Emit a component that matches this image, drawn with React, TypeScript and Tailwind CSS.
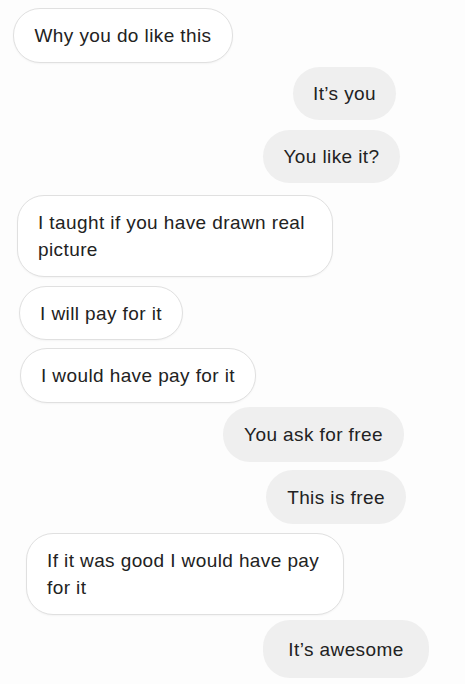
import React from "react";

type Msg = { text: string; me: boolean; cls: string };

const msgs: Msg[] = [
  { text: "Why you do like this", me: false, cls: "mt-[8px] ml-[13px] h-[55px] w-[220px] justify-center whitespace-nowrap" },
  { text: "It\u2019s you", me: true, cls: "mt-[4px] mr-[69px] h-[53px] w-[103px] justify-center whitespace-nowrap" },
  { text: "You like it?", me: true, cls: "mt-[10px] mr-[65px] h-[53px] w-[137px] justify-center whitespace-nowrap" },
  { text: "I taught if you have drawn real picture", me: false, cls: "mt-[12px] ml-[17px] w-[316px] px-5" },
  { text: "I will pay for it", me: false, cls: "mt-[9px] ml-[19px] h-[54px] w-[164px] justify-center whitespace-nowrap" },
  { text: "I would have pay for it", me: false, cls: "mt-[8px] ml-[20px] h-[55px] w-[236px] justify-center whitespace-nowrap" },
  { text: "You ask for free", me: true, cls: "mt-[4px] mr-[61px] h-[55px] w-[181px] justify-center whitespace-nowrap" },
  { text: "This is free", me: true, cls: "mt-[8px] mr-[59px] h-[54px] w-[140px] justify-center whitespace-nowrap" },
  { text: "If it was good I would have pay for it", me: false, cls: "mt-[9px] ml-[26px] w-[318px] px-5" },
  { text: "It\u2019s awesome", me: true, cls: "mt-[5px] mr-[36px] h-[58px] w-[166px] justify-center whitespace-nowrap" },
];

export default function App() {
  return (
    <div
      className="w-[465px] h-[684px] overflow-hidden bg-[#fdfdfd] flex flex-col text-[#222222]"
      style={{ fontFamily: '"Liberation Sans", Arial, sans-serif' }}
    >
      {msgs.map((m, i) => (
        <div
          key={i}
          className={
            (m.me
              ? "self-end bg-[#efefef] "
              : "self-start bg-white border border-[#e0e0e0] shadow-[0_1px_2px_rgba(0,0,0,0.04)] ") +
            "flex items-center py-[13px] rounded-[27px] text-[19px] leading-[27px] tracking-[0.4px] " +
            m.cls
          }
        >
          <span>{m.text}</span>
        </div>
      ))}
    </div>
  );
}
